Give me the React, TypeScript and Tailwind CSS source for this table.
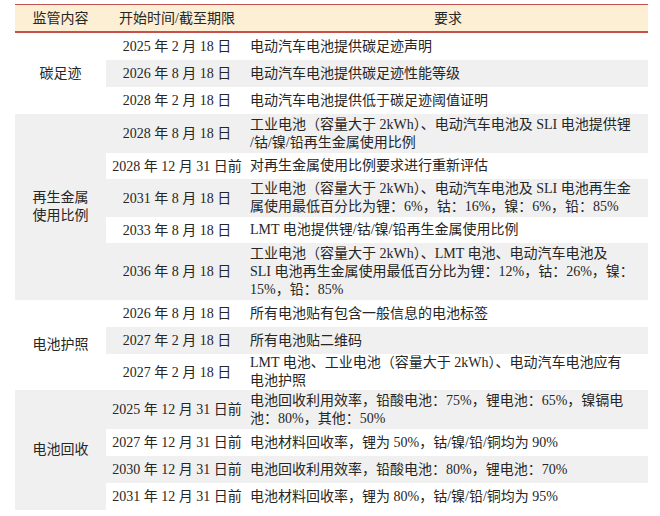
type Row = { date: string; req: string[]; h: string }
type Group = { name: string[]; gray: boolean; rows: Row[] }

const groups: Group[] = [
  {
    name: ['碳足迹'],
    gray: false,
    rows: [
      { date: '2025 年 2 月 18 日', req: ['电动汽车电池提供碳足迹声明'], h: 'h-[27px]' },
      { date: '2026 年 8 月 18 日', req: ['电动汽车电池提供碳足迹性能等级'], h: 'h-[27px]' },
      { date: '2028 年 2 月 18 日', req: ['电动汽车电池提供低于碳足迹阈值证明'], h: 'h-[27px]' },
    ],
  },
  {
    name: ['再生金属', '使用比例'],
    gray: true,
    rows: [
      {
        date: '2028 年 8 月 18 日',
        req: ['工业电池（容量大于 2kWh）、电动汽车电池及 SLI 电池提供锂', '/钴/镍/铅再生金属使用比例'],
        h: 'h-[39px]',
      },
      { date: '2028 年 12 月 31 日前', req: ['对再生金属使用比例要求进行重新评估'], h: 'h-[26px]' },
      {
        date: '2031 年 8 月 18 日',
        req: ['工业电池（容量大于 2kWh）、电动汽车电池及 SLI 电池再生金', '属使用最低百分比为锂：6%，钴：16%，镍：6%，铅：85%'],
        h: 'h-[38px]',
      },
      { date: '2033 年 8 月 18 日', req: ['LMT 电池提供锂/钴/镍/铅再生金属使用比例'], h: 'h-[26px]' },
      {
        date: '2036 年 8 月 18 日',
        req: [
          '工业电池（容量大于 2kWh）、LMT 电池、电动汽车电池及',
          'SLI 电池再生金属使用最低百分比为锂：12%，钴：26%，镍：',
          '15%，铅：85%',
        ],
        h: 'h-[57px]',
      },
    ],
  },
  {
    name: ['电池护照'],
    gray: false,
    rows: [
      { date: '2026 年 8 月 18 日', req: ['所有电池贴有包含一般信息的电池标签'], h: 'h-[27px]' },
      { date: '2027 年 2 月 18 日', req: ['所有电池贴二维码'], h: 'h-[27px]' },
      {
        date: '2027 年 2 月 18 日',
        req: ['LMT 电池、工业电池（容量大于 2kWh）、电动汽车电池应有', '电池护照'],
        h: 'h-[36px]',
      },
    ],
  },
  {
    name: ['电池回收'],
    gray: true,
    rows: [
      {
        date: '2025 年 12 月 31 日前',
        req: ['电池回收利用效率，铅酸电池：75%，锂电池：65%，镍镉电', '池：80%，其他：50%'],
        h: 'h-[39px]',
      },
      { date: '2027 年 12 月 31 日前', req: ['电池材料回收率，锂为 50%，钴/镍/铅/铜均为 90%'], h: 'h-[27px]' },
      { date: '2030 年 12 月 31 日前', req: ['电池回收利用效率，铅酸电池：80%，锂电池：70%'], h: 'h-[27px]' },
      { date: '2031 年 12 月 31 日前', req: ['电池材料回收率，锂为 80%，钴/镍/铅/铜均为 95%'], h: 'h-[27px]' },
    ],
  },
]

export default function App() {
  let idx = 0
  return (
    <div
      className="w-[660px] h-[516px] bg-white pl-[15px] pt-[4px] text-[14px] text-[#262626]"
      style={{ fontFamily: '"Liberation Serif", "Noto Sans CJK SC", serif' }}
    >
      <div className="w-[633px]">
        {/* header */}
        <div className="flex h-[29px] items-center bg-[#fdefd4] border-t-[1.5px] border-b-2 border-[#c4514e]">
          <div className="w-[91px] text-center">监管内容</div>
          <div className="w-[142px] text-center">开始时间/截至期限</div>
          <div className="flex-1 text-center">要求</div>
        </div>

        {groups.map((g, gi) => (
          <div key={gi} className="flex">
            <div
              className={`w-[91px] shrink-0 flex flex-col items-center justify-center leading-[18px] ${
                g.gray ? 'bg-[#f0f0f0]' : 'bg-white'
              }`}
            >
              {g.name.map((n) => (
                <div key={n}>{n}</div>
              ))}
            </div>
            <div className="flex-1 flex flex-col">
              {g.rows.map((r) => {
                const gray = idx++ % 2 === 1
                return (
                  <div
                    key={r.date + r.req[0]}
                    className={`flex items-center ${r.h} ${gray ? 'bg-[#f0f0f0]' : 'bg-white'}`}
                  >
                    <div className="w-[142px] shrink-0 text-center whitespace-nowrap">{r.date}</div>
                    <div className="flex-1 pl-[2px] leading-[18px] whitespace-nowrap">
                      {r.req.map((l) => (
                        <div key={l}>{l}</div>
                      ))}
                    </div>
                  </div>
                )
              })}
            </div>
          </div>
        ))}
      </div>
    </div>
  )
}
